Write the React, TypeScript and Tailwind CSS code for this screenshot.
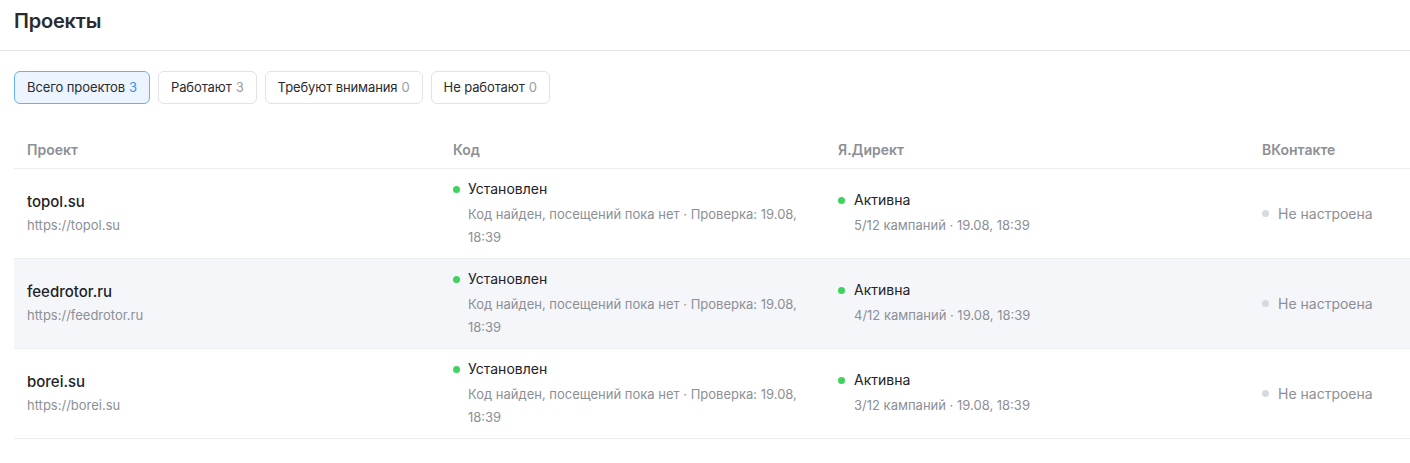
import React from "react";

const rows = [
  { name: "topol.su", url: "https://topol.su", camp: "5/12 кампаний · 19.08, 18:39" },
  { name: "feedrotor.ru", url: "https://feedrotor.ru", camp: "4/12 кампаний · 19.08, 18:39" },
  { name: "borei.su", url: "https://borei.su", camp: "3/12 кампаний · 19.08, 18:39" },
];

const filters = [
  { label: "Всего проектов", count: 3, active: true },
  { label: "Работают", count: 3 },
  { label: "Требуют внимания", count: 0 },
  { label: "Не работают", count: 0 },
];

export default function App() {
  return (
    <div className="w-[1410px] h-[463px] bg-white text-[#222326] overflow-hidden" style={{ fontFamily: "Inter, 'Noto Sans', sans-serif" }}>
      <div className="h-[51px] border-b border-[#e6e7eb] px-[14px] pt-[8px]">
        <h1 className="text-[20px] leading-[26px] font-semibold text-[#2a2b2e] tracking-[-0.2px]">Проекты</h1>
      </div>
      <div className="flex gap-2 px-[14px] mt-[20px]">
        {filters.map((f) => (
          <div
            key={f.label}
            className={
              "h-[33px] flex items-center px-[12px] rounded-[6px] border text-[13px] tracking-[-0.1px] " +
              (f.active ? "bg-[#ebf4ff] border-[#6aaef5]" : "bg-white border-[#e1e3e8]")
            }
          >
            <span className="text-[#2a2b2e]">{f.label}</span>
            <span className={"ml-[4px] " + (f.active ? "text-[#3e8ff0]" : "text-[#9a9ca1]")}>{f.count}</span>
          </div>
        ))}
      </div>
      <div className="ml-[14px] mt-[26px] w-[1396px]">
        <div className="grid grid-cols-[426px_385px_424px_1fr] h-[39px] items-center border-b border-[#eceef2] text-[14px] font-semibold text-[#8c8f96]">
          <div className="px-[13px]">Проект</div>
          <div className="px-[13px]">Код</div>
          <div className="px-[13px]">Я.Директ</div>
          <div className="px-[13px]">ВКонтакте</div>
        </div>
        {rows.map((r, i) => (
          <div
            key={r.name}
            className={
              "grid grid-cols-[426px_385px_424px_1fr] h-[90px] border-b border-[#eceef2] " +
              (i === 1 ? "bg-[#f5f6fa]" : "bg-white")
            }
          >
            <div className="px-[13px] flex flex-col justify-center pb-[1px]">
              <div className="text-[15px] leading-[22px] font-medium text-[#222326]">{r.name}</div>
              <div className="text-[13px] leading-[20px] mt-[2px] text-[#8c8f96]">{r.url}</div>
            </div>
            <div className="px-[13px] pt-[10px]">
              <div className="flex items-center gap-2 text-[14px] leading-[20px] text-[#222326]">
                <span className="w-[7px] h-[7px] rounded-full bg-[#3fd35d] shrink-0" />
                Установлен
              </div>
              <div className="pl-[15px] mt-[4px] text-[13px] leading-[23px] text-[#8c8f96]">
                Код найден, посещений пока нет · Проверка: 19.08, 18:39
              </div>
            </div>
            <div className="px-[13px] flex flex-col justify-center">
              <div className="flex items-center gap-[9px] text-[14px] leading-[20px] text-[#222326]">
                <span className="w-[7px] h-[7px] rounded-full bg-[#3fd35d] shrink-0" />
                Активна
              </div>
              <div className="pl-[16px] mt-[4px] text-[13px] leading-[23px] text-[#8c8f96]">{r.camp}</div>
            </div>
            <div className="px-[13px] flex items-center">
              <div className="flex items-center gap-[9px] text-[14px] leading-[20px] text-[#8c8f96]">
                <span className="w-[7px] h-[7px] rounded-full bg-[#d5d9e0] shrink-0" />
                Не настроена
              </div>
            </div>
          </div>
        ))}
      </div>
    </div>
  );
}
